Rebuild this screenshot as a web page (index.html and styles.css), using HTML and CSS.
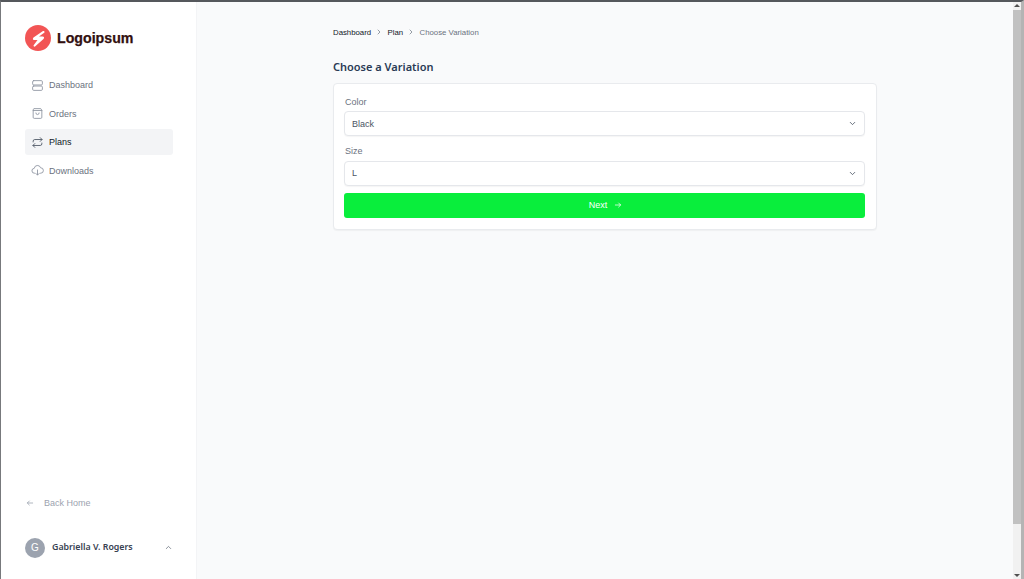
FILE: index.html
```html
<!DOCTYPE html>
<html lang="en">
<head>
<meta charset="utf-8">
<title>Choose a Variation</title>
<link rel="stylesheet" href="styles.css">
</head>
<body>
<div class="window">
  <aside class="sidebar">
    <div class="brand">
      <svg class="brand-mark" viewBox="0 0 26 26"><circle cx="13" cy="13" r="13" fill="#f25555"/><path d="M18 6 8.500 12.500Q7 14.500 9 15h3.500L8.500 20.500Q8.500 22 10 21.500L18.500 14Q20 11.500 17.500 11.500H14L19.500 7.500Q20 5.500 18 6z" fill="#fff"/></svg>
      <span class="brand-name">Logoipsum</span>
    </div>
    <nav class="nav">
      <a class="nav-item"><svg class="nav-icon" viewBox="0 0 24 24"><rect x="3" y="3" width="18" height="8" rx="2"/><rect x="3" y="13" width="18" height="8" rx="2"/></svg>Dashboard</a>
      <a class="nav-item"><svg class="nav-icon" viewBox="0 0 24 24"><path d="M6 3h12l2 3v13a2 2 0 0 1-2 2H6a2 2 0 0 1-2-2V6z"/><path d="M4 6.500h16M9 11a3 3 0 0 0 6 0"/></svg>Orders</a>
      <a class="nav-item is-active"><svg class="nav-icon" viewBox="0 0 24 24"><path d="M4 11V9.500A3 3 0 0 1 7 6.500h13M17 3l3.500 3.500L17 10M20 13v1.500a3 3 0 0 1-3 3H4M7 14l-3.500 3.500L7 21"/></svg>Plans</a>
      <a class="nav-item"><svg class="nav-icon" viewBox="0 0 24 24"><path d="M7 17H6.500a4.500 4.500 0 0 1-.5-9 6 6 0 0 1 11.700-1A5 5 0 0 1 18 17h-1M12 11v9M9 17.500l3 3 3-3"/></svg>Downloads</a>
    </nav>
    <div class="sidebar-foot">
      <a class="back"><svg class="back-icon" viewBox="0 0 24 24"><path d="M20 12H4M10 6l-6 6 6 6"/></svg>Back Home</a>
      <div class="user">
        <span class="avatar">G</span>
        <span class="user-name">Gabriella V. Rogers</span>
        <svg class="user-caret" viewBox="0 0 24 24"><path d="m6 15 6-6 6 6"/></svg>
      </div>
    </div>
  </aside>
  <main class="main">
    <div class="content">
      <div class="crumbs">
        <span class="crumb">Dashboard</span>
        <svg class="crumb-sep" viewBox="0 0 24 24"><path d="m9 6 6 6-6 6"/></svg>
        <span class="crumb">Plan</span>
        <svg class="crumb-sep" viewBox="0 0 24 24"><path d="m9 6 6 6-6 6"/></svg>
        <span class="crumb crumb-current">Choose Variation</span>
      </div>
      <h1 class="title">Choose a Variation</h1>
      <form class="card">
        <div class="field">
          <div class="label">Color</div>
          <div class="select"><span>Black</span><svg class="select-caret" viewBox="0 0 24 24"><path d="m6 9 6 6 6-6"/></svg></div>
        </div>
        <div class="field">
          <div class="label">Size</div>
          <div class="select"><span>L</span><svg class="select-caret" viewBox="0 0 24 24"><path d="m6 9 6 6 6-6"/></svg></div>
        </div>
        <div class="submit">Next<svg class="submit-icon" viewBox="0 0 24 24"><path d="M4 12h16M14 6l6 6-6 6"/></svg></div>
      </form>
    </div>
  </main>
  <div class="scrollbar"><div class="scroll-arrow-up"></div><div class="scroll-thumb"></div><div class="scroll-arrow"></div></div>
</div>
</body>
</html>
```
FILE: styles.css
```css
* { box-sizing: border-box; }
html, body { margin: 0; height: 100%; overflow: hidden; }
body { font-family: "Liberation Sans", Arial, sans-serif; background: #f9fafb; }
svg { display: block; fill: none; stroke: currentColor; stroke-width: 1.7; stroke-linecap: round; stroke-linejoin: round; flex: none; }

.window { display: flex; height: 579px; border-top: 2px solid #55585c; border-left: 1px solid #77797c; border-right: 3px solid #b4b4b4; }

.sidebar { width: 196px; flex: none; display: flex; flex-direction: column; background: #fff; border-right: 1px solid #f3f4f6; padding: 0 23px 0 24px; }
.brand { display: flex; align-items: center; gap: 6px; margin-top: 23px; height: 26px; }
.brand-mark { width: 26px; height: 26px; stroke: none; }
.brand-name { font-size: 14.200px; font-weight: 700; color: #32100f; -webkit-text-stroke: 0.25px #32100f; }

.nav { display: flex; flex-direction: column; gap: 2.670px; margin-top: 21px; }
.nav-item { display: flex; align-items: center; gap: 5px; height: 26px; padding: 0 6px; border-radius: 3px; font-size: 9px; color: #6b7280; }
.nav-item.is-active { background: #f3f4f6; color: #111827; }
.nav-icon { width: 13px; height: 13px; color: #8c93a0; stroke-width: 1.6; }
.is-active .nav-icon { color: #4b5563; }

.sidebar-foot { margin-top: auto; display: flex; flex-direction: column; }
.back { display: flex; align-items: center; gap: 10px; padding-left: 1px; font-size: 9px; color: #9ca3af; }
.back-icon { width: 8px; height: 8px; stroke-width: 2.4; }
.user { display: flex; align-items: center; margin: 29px 0 21px; height: 21px; }
.avatar { width: 20px; height: 20px; border-radius: 50%; background: #9ca3af; color: #fff; font-size: 10px; display: flex; align-items: center; justify-content: center; }
.user-name { margin: 0 0 2px 7px; font-family: "Noto Sans", sans-serif; font-size: 8.800px; font-weight: 600; color: #374151; }
.user-caret { width: 9px; height: 9px; margin-left: auto; color: #4b5563; }

.main { flex: 1; min-width: 0; }
.content { width: 544px; margin-left: 136px; padding-top: 25px; }
.crumbs { display: flex; align-items: center; gap: 4.200px; height: 10px; font-size: 7.800px; color: #111827; }
.crumb-current { color: #6b7280; }
.crumb-sep { width: 8px; height: 8px; color: #4b5563; }
.title { margin: 23px 0 0; font-family: "Noto Sans", sans-serif; font-size: 11px; line-height: 14px; font-weight: 600; color: #2a3a55; }
.card { margin-top: 9px; padding: 12px 11px 0 10px; background: #fff; border: 1px solid #e9ebee; border-radius: 4px; box-shadow: 0 1px 1px rgba(0,0,0,.04); height: 147px; }
.field { margin-bottom: 9px; }
.label { padding-left: 1px; font-size: 9px; line-height: 12px; color: #6b7280; margin-bottom: 3.450px; }
.select { display: flex; align-items: center; justify-content: space-between; height: 25px; padding: 0 7px; background: #fff; border: 1px solid #e5e7eb; border-radius: 4px; box-shadow: 0 1px 1px rgba(0,0,0,.04); font-size: 9px; color: #4b5563; }
.select-caret { width: 9px; height: 9px; color: #4b5563; stroke-width: 2.200; }
.submit { display: flex; align-items: center; justify-content: center; gap: 7px; height: 25px; margin-top: -2px; padding-left: 2px; background: #09ee3c; border-radius: 3px; color: #fff; font-size: 9px; }
.submit-icon { width: 8px; height: 8px; stroke-width: 2.2; }

.scrollbar { position: relative; width: 8px; flex: none; background: #f1f1f1; padding-top: 8px; }
.scroll-thumb { height: 514px; background: #c1c1c1; }
.scroll-arrow { position: absolute; bottom: 2px; left: 1px; width: 0; height: 0; border-left: 3px solid transparent; border-right: 3px solid transparent; border-top: 3px solid #505050; }
.scroll-arrow-up { position: absolute; top: 2px; left: 1px; width: 0; height: 0; border-left: 3px solid transparent; border-right: 3px solid transparent; border-bottom: 3px solid #505050; }
```
